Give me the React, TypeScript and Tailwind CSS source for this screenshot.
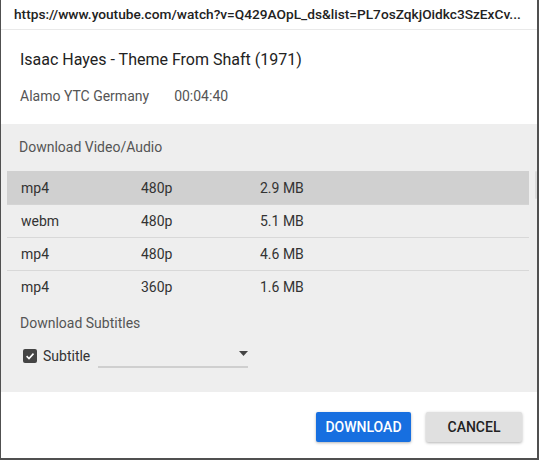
import React from 'react';

type Format = { ext: string; quality: string; size: string };

const formats: Format[] = [
  { ext: 'mp4', quality: '480p', size: '2.9 MB' },
  { ext: 'webm', quality: '480p', size: '5.1 MB' },
  { ext: 'mp4', quality: '480p', size: '4.6 MB' },
  { ext: 'mp4', quality: '360p', size: '1.6 MB' },
];

const App: React.FC = () => {
  const selected = 0;

  return (
    <div
      className="w-[539px] h-[460px] bg-white border-l border-r-2 border-b-2 border-[#505050] flex flex-col overflow-hidden"
      style={{ fontFamily: 'Roboto, "Liberation Sans", Arial, sans-serif' }}
    >
      {/* url bar */}
      <div className="h-[30px] shrink-0 border-b border-[#e9e9e9] flex items-center pl-[13px] pr-1">
        <span className="text-[13.7px] font-medium text-[#222] whitespace-nowrap">
          https://www.youtube.com/watch?v=Q429AOpL_ds&amp;list=PL7osZqkjOidkc3SzExCv...
        </span>
      </div>

      {/* video info */}
      <div className="shrink-0 pl-[19px] pt-[18px] pb-[18px]">
        <h2 className="text-[16px] leading-[24px] text-[#222]">Isaac Hayes - Theme From Shaft (1971)</h2>
        <div className="mt-[14px] flex text-[14px] leading-[20px] text-[#555]">
          <span>Alamo YTC Germany</span>
          <span className="ml-[25px]">00:04:40</span>
        </div>
      </div>

      {/* formats */}
      <div className="bg-[#eeeeee] h-[268px] shrink-0 flex flex-col">
        <div className="pl-[18px] pt-[13px] mb-[14px] text-[14px] leading-[20px] text-[#555]">
          Download Video/Audio
        </div>
        <div className="flex pl-[6px]">
          <div className="w-[522px]">
            {formats.map((f, i) => (
              <div
                key={i}
                className={`h-[33px] flex items-center pl-[14px] text-[14px] text-[#333] border-t ${
                  i === selected ? 'bg-[#d0d0d0] border-transparent' : i === 1 ? 'border-[#d4d4d4]' : 'border-[#d8d8d8]'
                }`}
              >
                <span className="w-[120px]">{f.ext}</span>
                <span className="w-[119px]">{f.quality}</span>
                <span>{f.size}</span>
              </div>
            ))}
          </div>
          <div className="ml-[6px] w-[2px]">
            <div className="h-[28px] rounded-full bg-[#dcdcdc]" />
          </div>
        </div>

        <div className="pl-[19px] mt-[10px] text-[14px] leading-[20px] text-[#555]">Download Subtitles</div>
        <div className="mt-[11px] h-[24px] flex items-center pl-[22px]">
          <div className="w-[14px] h-[14px] rounded-[2px] bg-[#444] flex items-center justify-center">
            <svg width="10" height="10" viewBox="0 0 10 10" fill="none">
              <path d="M1.6 5.2 L4 7.5 L8.5 2.6" stroke="#fff" strokeWidth="1.6" />
            </svg>
          </div>
          <span className="ml-[6px] text-[14px] text-[#333]">Subtitle</span>
          <div className="ml-[8px] w-[150px] h-[24px] border-b-2 border-[#cfcfcf] flex items-start justify-end pt-[7px]">
            <svg width="9" height="5" viewBox="0 0 9 5">
              <path d="M0 0 H9 L4.5 5 Z" fill="#444" />
            </svg>
          </div>
        </div>
      </div>

      {/* footer */}
      <div className="flex-1 flex justify-end items-start pt-[20px] pr-[15px] gap-[15px]">
        <button className="w-[95px] h-[30px] rounded-[2px] bg-[#176fe0] text-white text-[14px] font-medium shadow-[0_1px_3px_rgba(0,0,0,0.3)]">
          DOWNLOAD
        </button>
        <button className="w-[96px] h-[30px] rounded-[2px] bg-[#e0e0e0] text-[#222] text-[14px] font-medium shadow-[0_1px_3px_rgba(0,0,0,0.3)]">
          CANCEL
        </button>
      </div>
    </div>
  );
};

export default App;
